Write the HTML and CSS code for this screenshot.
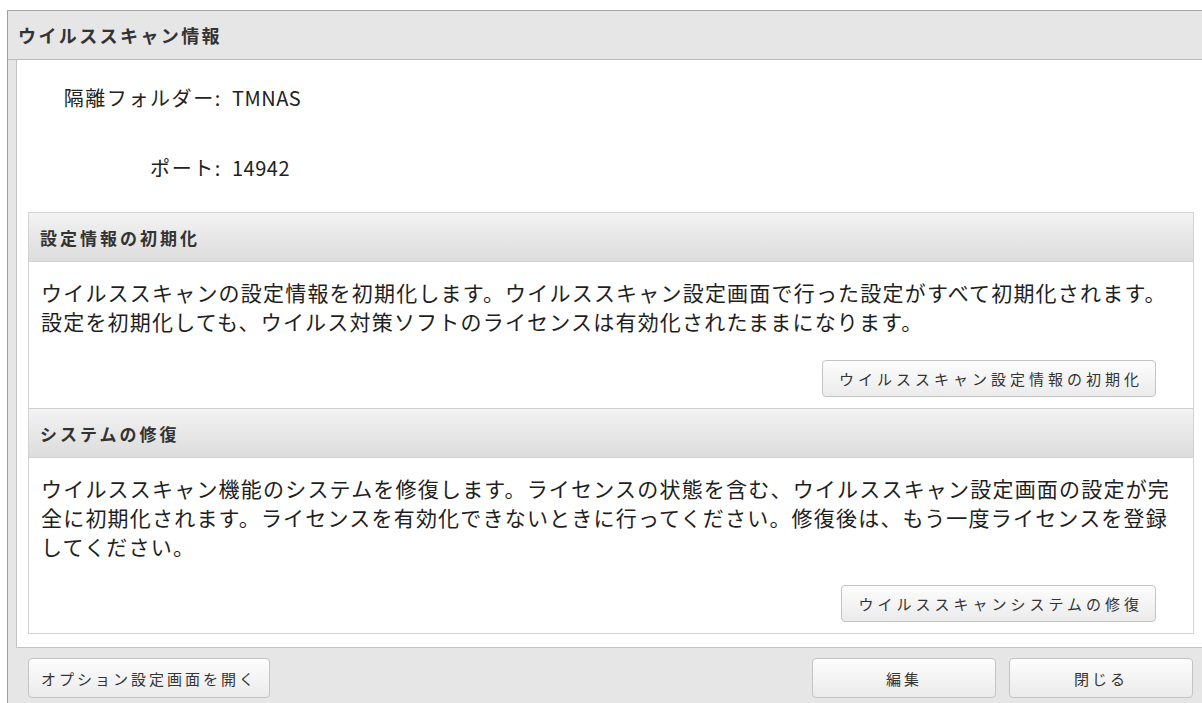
FILE: index.html
```html
<!DOCTYPE html>
<html lang="ja">
<head>
<meta charset="utf-8">
<title>ウイルススキャン情報</title>
<link rel="stylesheet" href="styles.css">
</head>
<body>
<div class="dialog">
  <div class="title">ウイルススキャン情報</div>
  <div class="content">
    <div class="info">
      <div class="info-row"><span class="label">隔離フォルダー:</span><span class="value">TMNAS</span></div>
      <div class="info-row"><span class="label">ポート:</span><span class="value">14942</span></div>
    </div>
    <div class="sections">
      <div class="section">
        <div class="sec-head">設定情報の初期化</div>
        <div class="sec-body">
          <p class="desc">ウイルススキャンの設定情報を初期化します。ウイルススキャン設定画面で行った設定がすべて初期化されます。<br>設定を初期化しても、ウイルス対策ソフトのライセンスは有効化されたままになります。</p>
          <div class="actions"><button class="btn sec-btn">ウイルススキャン設定情報の初期化</button></div>
        </div>
      </div>
      <div class="section">
        <div class="sec-head">システムの修復</div>
        <div class="sec-body">
          <p class="desc">ウイルススキャン機能のシステムを修復します。ライセンスの状態を含む、ウイルススキャン設定画面の設定が完<br>全に初期化されます。ライセンスを有効化できないときに行ってください。修復後は、もう一度ライセンスを登録<br>してください。</p>
          <div class="actions"><button class="btn sec-btn">ウイルススキャンシステムの修復</button></div>
        </div>
      </div>
    </div>
  </div>
  <div class="footer">
    <button class="btn foot-btn opt-btn">オプション設定画面を開く</button>
    <div class="foot-right">
      <button class="btn foot-btn wide-btn">編集</button>
      <button class="btn foot-btn wide-btn">閉じる</button>
    </div>
  </div>
</div>
</body>
</html>
```

FILE: styles.css
```css
html, body {
  margin: 0;
  padding: 0;
  background: #ffffff;
}

body {
  font-family: "Noto Sans CJK JP", "Noto Sans", sans-serif;
  color: #222;
  overflow: hidden;
}

.dialog {
  margin: 10px 0 0 7px;
  height: 693px;
  box-sizing: border-box;
  border-left: 1px solid #9c9c9c;
  border-top: 1px solid #a4a4a4;
  background: #e6e6e6;
  display: flex;
  flex-direction: column;
}

.title {
  height: 48px;
  display: flex;
  align-items: center;
  padding-left: 10px;
  font-size: 18px;
  font-weight: bold;
  letter-spacing: 2.4px;
  color: #333;
  border-bottom: 1px solid #bdbdbd;
}

.content {
  margin-left: 8px;
  background: #ffffff;
  border-left: 1px solid #c4c4c4;
  border-bottom: 1px solid #c4c4c4;
  padding: 2px 8px 13px 11px;
}

.info-row {
  height: 70px;
  display: grid;
  grid-template-columns: 194px auto;
  column-gap: 10px;
  align-items: center;
  font-size: 20px;
  letter-spacing: 1.6px;
  color: #222;
}

.label {
  text-align: right;
}

.value {
  letter-spacing: 0.5px;
}

.sections {
  margin-top: 10px;
  border: 1px solid #d2d2d2;
}

.section + .section .sec-head {
  border-top: 1px solid #d2d2d2;
}

.sec-head {
  height: 48px;
  display: flex;
  align-items: center;
  padding-left: 11px;
  background: linear-gradient(#f3f3f3, #dcdcdc);
  border-bottom: 1px solid #d2d2d2;
  font-size: 17px;
  font-weight: bold;
  letter-spacing: 3px;
  color: #333;
}

.sec-body {
  padding: 16px 37px 11px 12px;
}

.desc {
  margin: 0;
  font-size: 21px;
  line-height: 29px;
  letter-spacing: 1.2px;
  white-space: nowrap;
  color: #1e1e1e;
}

.actions {
  margin-top: 24px;
  display: flex;
  justify-content: flex-end;
}

.btn {
  font-family: "Noto Sans CJK JP", "Noto Sans", sans-serif;
  font-size: 15px;
  color: #333;
  background: linear-gradient(#fdfdfd, #ebebeb);
  border: 1px solid #c4c4c4;
  border-radius: 4px;
  box-sizing: border-box;
  cursor: pointer;
}

.sec-btn {
  height: 37px;
  padding: 0 12px 0 16px;
  letter-spacing: 4px;
}

.footer {
  flex: 1;
  display: flex;
  justify-content: space-between;
  align-items: flex-start;
  padding: 10px 9px 0 20px;
}

.foot-btn {
  height: 40px;
  letter-spacing: 3px;
}

.opt-btn {
  width: 242px;
}

.foot-right {
  display: flex;
  gap: 13px;
}

.wide-btn {
  width: 184px;
}
```
